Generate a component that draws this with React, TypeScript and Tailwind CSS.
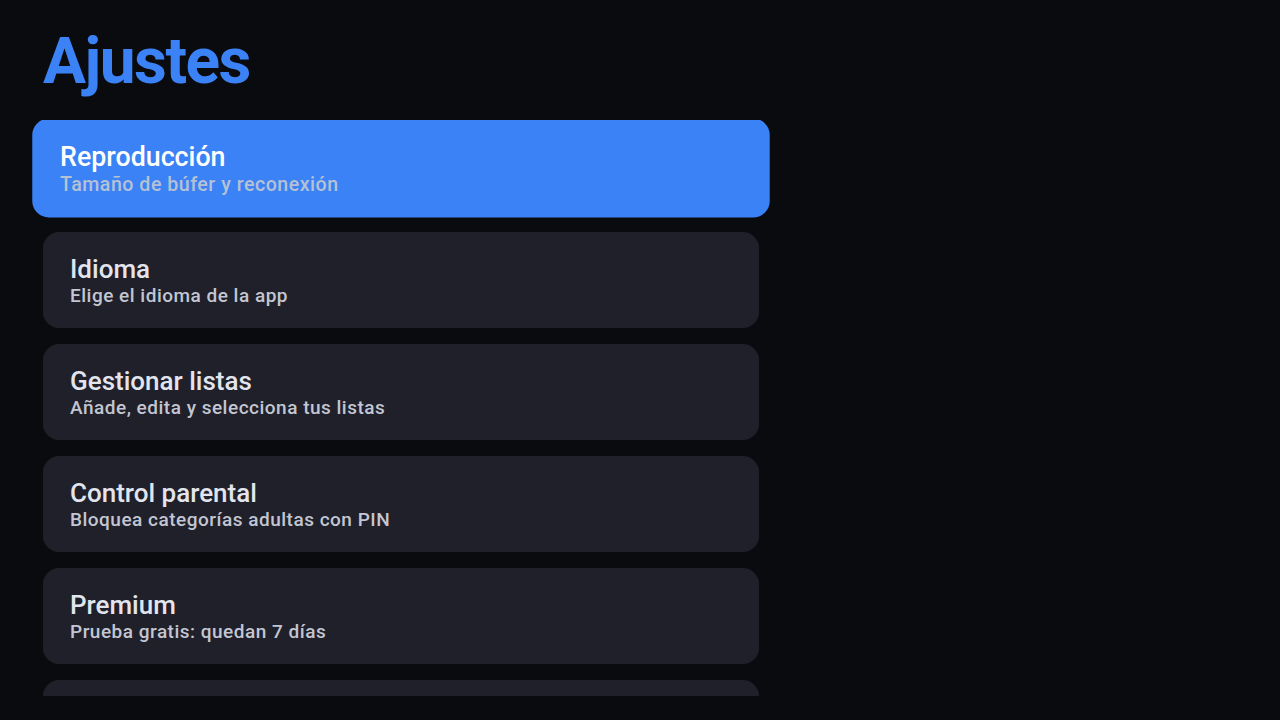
import { useState } from 'react';

type SettingItem = {
  id: string;
  title: string;
  subtitle: string;
};

const ITEMS: SettingItem[] = [
  { id: 'playback', title: 'Reproducción', subtitle: 'Tamaño de búfer y reconexión' },
  { id: 'language', title: 'Idioma', subtitle: 'Elige el idioma de la app' },
  { id: 'lists', title: 'Gestionar listas', subtitle: 'Añade, edita y selecciona tus listas' },
  { id: 'parental', title: 'Control parental', subtitle: 'Bloquea categorías adultas con PIN' },
  { id: 'premium', title: 'Premium', subtitle: 'Prueba gratis: quedan 7 días' },
  { id: 'about', title: 'Acerca de', subtitle: 'Versión y licencias' },
];

function SettingRow({ item, focused, onFocus }: { item: SettingItem; focused: boolean; onFocus: () => void }) {
  return (
    <button
      type="button"
      onMouseEnter={onFocus}
      onFocus={onFocus}
      className={`flex h-[96px] w-full shrink-0 flex-col justify-center rounded-[16px] px-[27px] text-left outline-none transition-transform ${
        focused ? 'scale-[1.03] bg-[#3b82f6]' : 'bg-[#1f2029]'
      }`}
    >
      <span className={`text-[26px] font-medium leading-[32px] ${focused ? 'text-white' : 'text-[#e3e5ee]'}`}>
        {item.title}
      </span>
      <span className={`text-[19px] font-medium leading-[22px] tracking-[0.5px] ${focused ? 'text-[#b7c1d4]' : 'text-[#c3c6d2]'}`}>
        {item.subtitle}
      </span>
    </button>
  );
}

export default function App() {
  const [focusedId, setFocusedId] = useState('playback');

  return (
    <div className="flex h-[720px] w-[1280px] flex-col overflow-hidden bg-[#0a0b0f] pb-6 font-['Roboto',sans-serif]">
      <h1 className="pl-[43px] pt-[24px] text-[64px] font-bold leading-[76px] tracking-[-1.5px] text-[#3b82f6]">
        Ajustes
      </h1>
      <div className="ml-[31px] mt-[20px] flex min-h-0 w-[740px] flex-1 flex-col overflow-hidden px-[12px]">
        <div className="flex w-[716px] flex-col gap-4">
          {ITEMS.map((item) => (
            <SettingRow
              key={item.id}
              item={item}
              focused={item.id === focusedId}
              onFocus={() => setFocusedId(item.id)}
            />
          ))}
        </div>
      </div>
    </div>
  );
}
